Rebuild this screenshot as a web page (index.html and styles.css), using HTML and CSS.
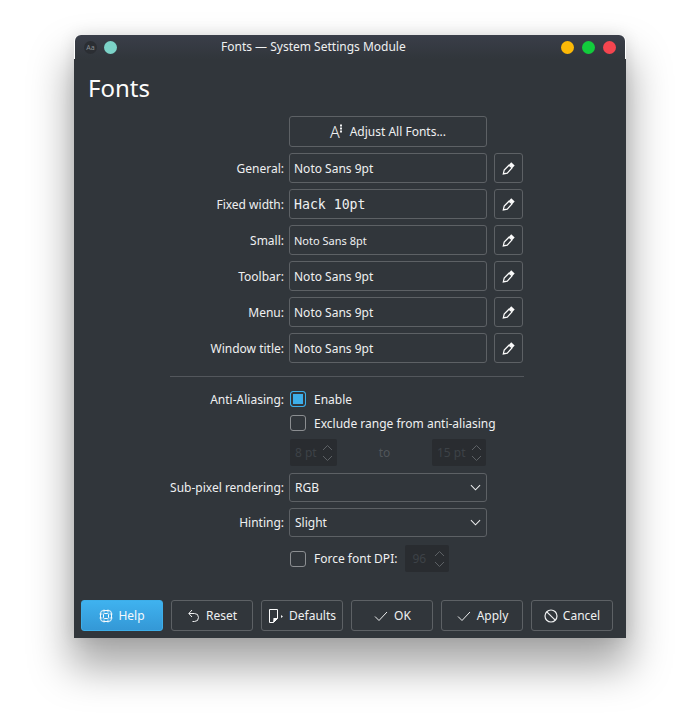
FILE: index.html
```html
<!DOCTYPE html>
<html lang="en">
<head>
    <meta charset="UTF-8">
    <title>Fonts — System Settings Module</title>
    <link rel="stylesheet" href="styles.css">
</head>
<body>
    <div class="window">
        <div class="titlebar">
            <div class="title-left">
                <span class="app-icon">Aa</span>
                <span class="dot dot-teal"></span>
            </div>
            <div class="title">Fonts — System Settings Module</div>
            <div class="title-right">
                <span class="dot dot-yellow"></span>
                <span class="dot dot-green"></span>
                <span class="dot dot-red"></span>
            </div>
        </div>

        <div class="content">
            <h1>Fonts</h1>

            <div class="font-grid">
                <div class="btn adjust-btn">
                    <span class="adjust-icon">A<svg width="4" height="11" viewBox="0 0 4 11"><path d="M0 1.500h2M0 4.500h2M0 7.500h2" stroke="#eff0f1" stroke-width="2" stroke-dasharray="2 0"/></svg></span>
                    Adjust All Fonts...
                </div>

                <label>General:</label>
                <div class="field">Noto Sans 9pt</div>
                <div class="btn pencil-btn"><svg width="14" height="14" viewBox="0 0 16 16"><path d="M10.500 1.500l4 3.500-2.500 2.800-4-3.500z" fill="#fcfcfc"/><path d="M8 4.800l3.500 3-5.500 6-4.500 1 1-4.500z" fill="none" stroke="#fcfcfc" stroke-width="1.400"/></svg></div>

                <label>Fixed width:</label>
                <div class="field mono">Hack 10pt</div>
                <div class="btn pencil-btn"><svg width="14" height="14" viewBox="0 0 16 16"><path d="M10.500 1.500l4 3.500-2.500 2.800-4-3.500z" fill="#fcfcfc"/><path d="M8 4.800l3.500 3-5.500 6-4.500 1 1-4.500z" fill="none" stroke="#fcfcfc" stroke-width="1.400"/></svg></div>

                <label>Small:</label>
                <div class="field small">Noto Sans 8pt</div>
                <div class="btn pencil-btn"><svg width="14" height="14" viewBox="0 0 16 16"><path d="M10.500 1.500l4 3.500-2.500 2.800-4-3.500z" fill="#fcfcfc"/><path d="M8 4.800l3.500 3-5.500 6-4.500 1 1-4.500z" fill="none" stroke="#fcfcfc" stroke-width="1.400"/></svg></div>

                <label>Toolbar:</label>
                <div class="field">Noto Sans 9pt</div>
                <div class="btn pencil-btn"><svg width="14" height="14" viewBox="0 0 16 16"><path d="M10.500 1.500l4 3.500-2.500 2.800-4-3.500z" fill="#fcfcfc"/><path d="M8 4.800l3.500 3-5.500 6-4.500 1 1-4.500z" fill="none" stroke="#fcfcfc" stroke-width="1.400"/></svg></div>

                <label>Menu:</label>
                <div class="field">Noto Sans 9pt</div>
                <div class="btn pencil-btn"><svg width="14" height="14" viewBox="0 0 16 16"><path d="M10.500 1.500l4 3.500-2.500 2.800-4-3.500z" fill="#fcfcfc"/><path d="M8 4.800l3.500 3-5.500 6-4.500 1 1-4.500z" fill="none" stroke="#fcfcfc" stroke-width="1.400"/></svg></div>

                <label>Window title:</label>
                <div class="field">Noto Sans 9pt</div>
                <div class="btn pencil-btn"><svg width="14" height="14" viewBox="0 0 16 16"><path d="M10.500 1.500l4 3.500-2.500 2.800-4-3.500z" fill="#fcfcfc"/><path d="M8 4.800l3.500 3-5.500 6-4.500 1 1-4.500z" fill="none" stroke="#fcfcfc" stroke-width="1.400"/></svg></div>
            </div>

            <div class="divider"></div>

            <div class="options-grid">
                <label class="first-label">Anti-Aliasing:</label>
                <div class="check-row"><span class="checkbox checked"></span>Enable</div>

                <div class="check-row col2"><span class="checkbox"></span>Exclude range from anti-aliasing</div>

                <div class="range-row col2">
                    <div class="spin spin-from">8 pt<svg width="11" height="18" viewBox="0 0 11 18"><path d="M1 6l4.500-4.500L10 6M1 12l4.500 4.500L10 12" fill="none" stroke="#5d6165"/></svg></div>
                    <span class="range-to">to</span>
                    <div class="spin spin-to">15 pt<svg width="11" height="18" viewBox="0 0 11 18"><path d="M1 6l4.500-4.500L10 6M1 12l4.500 4.500L10 12" fill="none" stroke="#5d6165"/></svg></div>
                </div>

                <label class="combo-label">Sub-pixel rendering:</label>
                <div class="combo">RGB<svg width="11" height="7" viewBox="0 0 12 7"><path d="M1 1l5 5 5-5" fill="none" stroke="#eff0f1" stroke-width="1.100"/></svg></div>

                <label class="combo-label">Hinting:</label>
                <div class="combo">Slight<svg width="11" height="7" viewBox="0 0 12 7"><path d="M1 1l5 5 5-5" fill="none" stroke="#eff0f1" stroke-width="1.100"/></svg></div>

                <div class="check-row col2 dpi-row">
                    <span class="checkbox"></span>Force font DPI:
                    <div class="spin spin-dpi">96<svg width="11" height="18" viewBox="0 0 11 18"><path d="M1 6l4.500-4.500L10 6M1 12l4.500 4.500L10 12" fill="none" stroke="#5d6165"/></svg></div>
                </div>
            </div>

            <div class="buttons">
                <div class="btn btn-help">
                    <svg width="14" height="14" viewBox="0 0 14 14" fill="none" stroke="#fcfcfc"><rect x="1.500" y="1.500" width="11" height="11" rx="3"/><rect x="4.500" y="4.500" width="5" height="5" rx="1"/><path d="M5 .5v3M9 .5v3M5 10.500v3M9 10.500v3M.5 5h3M.5 9h3M10.500 5h3M10.500 9h3" stroke-opacity=".85"/></svg>
                    Help
                </div>
                <div class="btn btn-tight">
                    <svg width="16" height="16" viewBox="1 0 16 16" fill="none" stroke="#eff0f1"><path d="M3 5.500h5.500a4 4 0 0 1 0 8H6.500M6 2L2.800 5.500 6 9"/></svg>
                    Reset
                </div>
                <div class="btn btn-tight">
                    <svg width="18" height="16" viewBox="1 0 18 16" fill="none" stroke="#fcfcfc"><path d="M2.500 1.500h8v9l-4 4h-4z"/><path d="M6 15l5-5H6.500z" fill="#fcfcfc" stroke="none"/><path d="M14 7v3l2-1.500z" fill="#eff0f1" stroke="none"/></svg>
                    Defaults
                </div>
                <div class="btn">
                    <svg width="16" height="16" viewBox="0 0 16 16" fill="none" stroke="#eff0f1"><path d="M2 8.500l4 4 8-8.500"/></svg>
                    OK
                </div>
                <div class="btn">
                    <svg width="16" height="16" viewBox="0 0 16 16" fill="none" stroke="#eff0f1"><path d="M2 8.500l4 4 8-8.500"/></svg>
                    Apply
                </div>
                <div class="btn btn-tight">
                    <svg width="16" height="16" viewBox="1 0 16 16" fill="none" stroke="#eff0f1" stroke-width="1.200"><circle cx="8" cy="8" r="6"/><path d="M3.800 3.800l8.400 8.400"/></svg>
                    Cancel
                </div>
            </div>
        </div>
    </div>
</body>
</html>
```

FILE: styles.css
```css
html, body {
    margin: 0;
    height: 100%;
}
body {
    background: #ffffff;
    font-family: "Noto Sans", sans-serif;
    font-size: 12px;
    color: #eff0f1;
    padding: 35px 74px 0;
    box-sizing: border-box;
    overflow: hidden;
}
.window {
    width: 552px;
    height: 603px;
    display: flex;
    flex-direction: column;
    box-shadow: 0 26px 40px 4px rgba(0, 0, 0, 0.34), 0 0 16px rgba(0, 0, 0, 0.1);
    border-radius: 6px 6px 0 0;
    background: linear-gradient(to bottom, transparent 24px, #31363b 24px);
}
.titlebar {
    height: 24px;
    margin: 0 1px;
    padding: 0 9px 0 9px;
    display: flex;
    align-items: center;
    border-radius: 6px 6px 0 0;
    background: linear-gradient(to bottom, #3a3e49, #31363b);
}
.title-left, .title-right {
    display: flex;
    align-items: center;
}
.title-left {
    gap: 7px;
}
.title-right {
    gap: 8px;
    margin-left: auto;
}
.title {
    margin-left: 104px;
    line-height: 24px;
}
.app-icon {
    width: 13px;
    height: 13px;
    border-radius: 50%;
    background: #2b2e33;
    color: #8a8e93;
    font-size: 7px;
    line-height: 13px;
    text-align: center;
}
.dot {
    width: 13px;
    height: 13px;
    border-radius: 50%;
    margin-top: 1px;
}
.dot-teal { background: #7cd3c8; }
.dot-yellow { background: #fdb907; }
.dot-green { background: #12cc3c; }
.dot-red { background: #f5454f; }

.content {
    flex: 1;
    display: flex;
    flex-direction: column;
    padding: 0 13px 7px 7px;
}
h1 {
    margin: 10px 0 0 7px;
    font-size: 24px;
    font-weight: 400;
    line-height: 37px;
    color: #fcfcfc;
}

.font-grid {
    margin: 10px 0 0 89px;
    display: grid;
    grid-template-columns: 114px 198px 31px;
    grid-auto-rows: 30px;
    grid-template-rows: 31px;
    column-gap: 5px;
    row-gap: 6px;
    align-items: center;
}
.font-grid label {
    grid-column: 1;
    padding-top: 1px;
}
.font-grid .pencil-btn {
    margin-left: 2px;
}
label {
    text-align: right;
    white-space: nowrap;
    line-height: 16px;
}
.first-label {
    padding-top: 1px;
    line-height: 15px;
}
.btn {
    box-sizing: border-box;
    height: 100%;
    border: 1px solid #5d6165;
    border-radius: 3px;
    background: #31363b;
    display: flex;
    align-items: center;
    justify-content: center;
    gap: 5px;
}
.btn-tight {
    gap: 3px;
}
.adjust-btn {
    grid-column: 2;
}
.adjust-icon {
    font-size: 16px;
    font-weight: 300;
    line-height: 1;
    display: flex;
    align-items: flex-start;
    margin-right: 1px;
}
.adjust-icon svg {
    margin-left: 0;
}
.field {
    box-sizing: border-box;
    height: 30px;
    border: 1px solid #5d6165;
    border-radius: 3px;
    padding-left: 4px;
    line-height: 29px;
}
.mono {
    font-family: "DejaVu Sans Mono", monospace;
    font-size: 13.2px;
}
.small {
    font-size: 11px;
}

.divider {
    height: 1px;
    margin: 13px 0 0 89px;
    width: 354px;
    background: #53575c;
}

.options-grid {
    margin: 14px 0 0 89px;
    display: grid;
    grid-template-columns: 114px 198px;
    column-gap: 5px;
    align-items: center;
}
.col2 {
    grid-column: 2;
}
.check-row {
    display: flex;
    align-items: center;
    height: 16px;
    margin-left: 1px;
    white-space: nowrap;
}
.check-row.col2 {
    margin-top: 8px;
}
.checkbox {
    box-sizing: border-box;
    width: 16px;
    height: 16px;
    margin-right: 8px;
    border: 1px solid #8b8e91;
    border-radius: 3px;
    flex: none;
}
.checked {
    border-color: #3daee9;
    background: #3daee9;
    box-shadow: inset 0 0 0 2px #31363b;
}
.range-row {
    display: flex;
    justify-content: space-between;
    align-items: center;
    margin: 8px 0 0 1px;
    width: 196px;
}
.spin {
    box-sizing: border-box;
    height: 27px;
    background: #292c30;
    border-radius: 2px;
    color: #3d4247;
    display: flex;
    align-items: center;
    justify-content: space-between;
    padding: 0 4px 0 5px;
}
.spin-from { width: 47px; }
.spin-to { width: 54px; }
.spin-dpi {
    width: 44px;
    margin-left: 8px;
    padding-left: 7px;
}
.range-to {
    color: #50555a;
}
.combo {
    box-sizing: border-box;
    height: 29px;
    border: 1px solid #5d6165;
    border-radius: 3px;
    padding: 0 5px 0 5px;
    display: flex;
    align-items: center;
    justify-content: space-between;
}
.options-grid .range-row + .combo-label,
.options-grid .range-row + .combo-label + .combo {
    margin-top: 7px;
}
.options-grid .combo + .combo-label,
.options-grid .combo + .combo-label + .combo {
    margin-top: 6px;
}
.dpi-row {
    height: 27px;
}
.buttons {
    margin-top: auto;
    display: grid;
    grid-template-columns: repeat(6, 82px);
    column-gap: 8px;
    height: 31px;
}
.btn-help {
    background: linear-gradient(to bottom, #3fb2ef, #3498d6);
    border-color: #3daee9;
    color: #f4f9fc;
}
```
